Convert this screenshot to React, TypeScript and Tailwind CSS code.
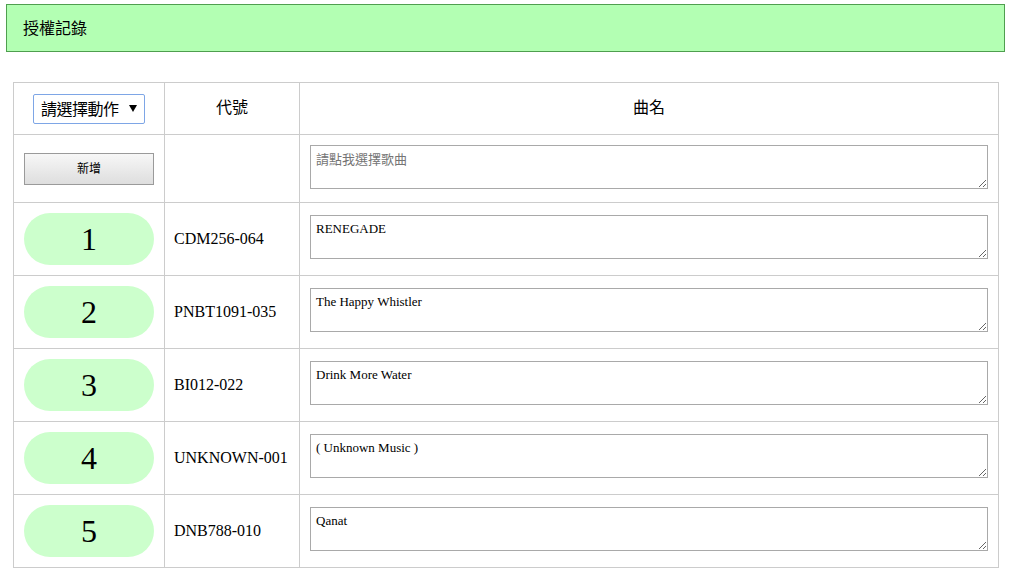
const rows = [
  { no: 1, code: "CDM256-064", title: "RENEGADE" },
  { no: 2, code: "PNBT1091-035", title: "The Happy Whistler" },
  { no: 3, code: "BI012-022", title: "Drink More Water" },
  { no: 4, code: "UNKNOWN-001", title: "( Unknown Music )" },
  { no: 5, code: "DNB788-010", title: "Qanat" },
];

const sans = "font-['Microsoft_JhengHei','Noto_Sans_CJK_TC',sans-serif]";
const serif = "font-['Liberation_Serif','Noto_Sans_CJK_TC',serif]";

const cell = "border-r border-b border-[#cccccc]";

export default function App() {
  return (
    <div className={`min-h-[574px] bg-white pt-1 ${sans}`}>
      <div className="mx-[6px] flex h-[48px] items-center border border-[#4f9f4f] bg-[#b3ffb3] pb-[3px] pl-[16px] text-[16px] text-black">
        授權記錄
      </div>

      <div className="mt-[30px] ml-[13px] w-[986px] border-t border-l border-[#cccccc]">
        <div className="grid grid-cols-[151px_135px_1fr]">
          <div className={`${cell} flex h-[52px] items-center justify-center`}>
            <div className="flex h-[30px] w-[112px] items-center rounded-[2px] border border-[#7ea6e6] bg-white pb-[2px] pl-[7px] text-[16px] leading-none text-black">
              <span className="tracking-[-0.5px]">請選擇動作</span>
              <svg width="8" height="7" viewBox="0 0 8 7" className="mt-[2px] ml-[10px]">
                <path d="M0 0h8L4 7z" fill="#000" />
              </svg>
            </div>
          </div>
          <div className={`${cell} flex items-center justify-center pb-[6px] text-[16px]`}>代號</div>
          <div className={`${cell} flex items-center justify-center pb-[6px] text-[16px]`}>曲名</div>

          <div className={`${cell} flex h-[68px] items-center justify-center`}>
            <button className="h-[32px] w-[130px] border border-[#9a9a9a] bg-gradient-to-b from-[#f7f7f7] to-[#dedede] pb-[1px] text-[12px] text-black">
              新增
            </button>
          </div>
          <div className={cell} />
          <div className={`${cell} pt-[10px] pl-[10px]`}>
            <textarea
              readOnly
              placeholder="請點我選擇歌曲"
              className={`block h-[44px] w-[678px] border border-[#a9a9a9] px-[5px] py-[3px] text-[13px] placeholder:text-[#757575] ${sans}`}
            />
          </div>

          {rows.map((r) => (
            <div key={r.no} className="contents">
              <div className={`${cell} flex h-[73px] items-center justify-center`}>
                <div className={`flex h-[52px] w-[130px] items-center justify-center rounded-full bg-[#ccffcc] pb-[1px] text-[32px] text-black ${serif}`}>
                  {r.no}
                </div>
              </div>
              <div className={`${cell} flex items-center pl-[9px] text-[16px] text-black ${serif}`}>
                {r.code}
              </div>
              <div className={`${cell} pt-[12px] pl-[10px]`}>
                <textarea
                  readOnly
                  defaultValue={r.title}
                  className={`block h-[44px] w-[678px] border border-[#a9a9a9] px-[5px] py-[3px] text-[13px] text-black ${serif}`}
                />
              </div>
            </div>
          ))}
        </div>
      </div>
    </div>
  );
}
